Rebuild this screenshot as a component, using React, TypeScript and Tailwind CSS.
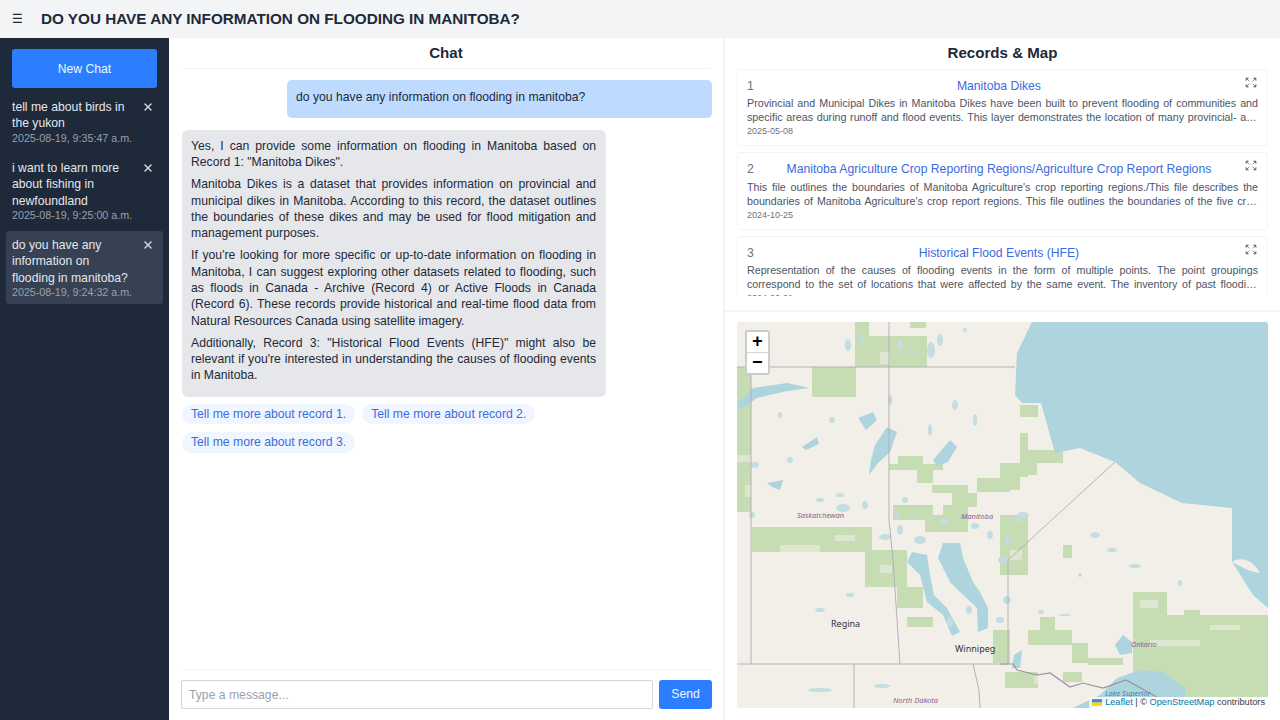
import { X } from "lucide-react";

const chats = [
  { title: "tell me about birds in the yukon", date: "2025-08-19, 9:35:47 a.m." },
  { title: "i want to learn more about fishing in newfoundland", date: "2025-08-19, 9:25:00 a.m." },
  { title: "do you have any information on flooding in manitoba?", date: "2025-08-19, 9:24:32 a.m.", active: true },
];

const records = [
  {
    title: "Manitoba Dikes",
    text: "Provincial and Municipal Dikes in Manitoba Dikes have been built to prevent flooding of communities and specific areas during runoff and flood events. This layer demonstrates the location of many provincial- and municipally-owned dikes across the whole of the province of Manitoba for reference and planning.",
    date: "2025-05-08",
  },
  {
    title: "Manitoba Agriculture Crop Reporting Regions/Agriculture Crop Report Regions",
    text: "This file outlines the boundaries of Manitoba Agriculture's crop reporting regions./This file describes the boundaries of Manitoba Agriculture's crop report regions. This file outlines the boundaries of the five crop reporting regions used across the province of Manitoba by the department.",
    date: "2024-10-25",
  },
  {
    title: "Historical Flood Events (HFE)",
    text: "Representation of the causes of flooding events in the form of multiple points. The point groupings correspond to the set of locations that were affected by the same event. The inventory of past flooding events in Canada has been compiled from many different historical sources over the years.",
    date: "2024-06-21",
  },
];

// map shapes, in page coordinates (viewBox matches the map's place on the page)
const greens = [
  [855, 322, 14, 14], [855, 336, 72, 31], [910, 322, 16, 6], [737, 367, 14, 145], [812, 367, 44, 30],
  [898, 456, 25, 10], [889, 464, 54, 6], [917, 464, 16, 19], [932, 485, 36, 8], [977, 478, 33, 14],
  [952, 493, 25, 14], [943, 505, 25, 27], [893, 505, 40, 15], [752, 527, 120, 25], [865, 550, 42, 37],
  [897, 587, 26, 21], [907, 617, 26, 10], [925, 515, 43, 17], [993, 630, 17, 33], [1000, 542, 28, 33],
  [1133, 592, 34, 23], [1133, 615, 135, 82], [1040, 617, 15, 13], [1028, 630, 44, 15], [1072, 643, 16, 20],
  [1088, 658, 35, 7], [1005, 672, 33, 16], [1063, 672, 19, 10], [1063, 545, 9, 13], [1020, 405, 18, 12],
  [1020, 433, 8, 44], [1028, 450, 35, 13], [1000, 463, 37, 12], [1000, 475, 20, 15], [1000, 515, 28, 27],
  [1184, 610, 16, 6],
];

// lighter blotches over the forest areas
const patches = [
  [737, 455, 14, 7], [745, 485, 6, 12], [780, 545, 40, 7], [835, 535, 20, 6], [880, 565, 12, 8], [1140, 600, 18, 8],
  [1150, 640, 50, 6], [1210, 625, 30, 5], [1010, 550, 12, 10], [1034, 676, 4, 8], [872, 323, 38, 11], [880, 352, 10, 12],
];

const lakes = [
  "737,404 753,388 787,383 810,388 787,391 757,398 740,410",
  "858,418 873,412 877,420 866,430",
  "875,445 887,427 897,432 890,452 878,463 869,475 871,460",
  "933,460 950,440 957,447 948,462 937,466",
  "802,447 817,437 819,444 806,450",
  "767,483 783,480 780,490 772,487",
  "943,543 960,543 963,558 973,582 980,592 988,608 988,628 978,632 977,608 960,592 950,582 938,558",
  "912,552 927,555 930,575 934,595 947,608 960,632 952,636 943,615 927,602 920,575 907,562",
  "1115,645 1123,635 1132,642 1132,653 1120,655",
  "1073,708 1100,695 1117,678 1140,670 1163,672 1185,688 1185,697 1120,697 1090,708",
  "1014,655 1022,650 1020,668 1012,668",
];

const ponds = [
  [848, 345, 3, 6], [862, 340, 2, 4], [931, 350, 4, 8], [940, 340, 3, 6], [965, 330, 2, 2], [900, 345, 3, 5],
  [890, 400, 2, 5], [912, 352, 4, 2], [955, 405, 3, 5], [975, 420, 2, 6], [930, 430, 2, 6], [780, 415, 2, 3],
  [832, 420, 3, 3], [755, 465, 4, 3], [790, 460, 3, 3], [840, 495, 4, 2], [843, 508, 7, 4], [820, 500, 4, 2],
  [865, 505, 3, 4], [905, 500, 3, 3], [897, 515, 3, 3], [752, 515, 3, 3], [885, 537, 6, 3], [900, 530, 3, 5],
  [945, 522, 5, 3], [920, 540, 6, 4], [975, 526, 4, 3], [990, 535, 3, 4], [1007, 540, 2, 5], [850, 595, 4, 2],
  [820, 610, 5, 2], [1003, 560, 5, 4], [1007, 600, 4, 4], [1023, 515, 6, 3], [1017, 520, 4, 2], [1095, 535, 5, 3],
  [1112, 550, 5, 2], [1135, 566, 6, 2], [1080, 575, 2, 2], [1180, 583, 2, 3], [1041, 612, 3, 2], [1065, 615, 6, 1],
  [820, 690, 12, 2], [882, 686, 8, 2], [1000, 620, 4, 3], [969, 610, 3, 4], [950, 622, 3, 5],
];

function ExpandIcon() {
  return (
    <svg viewBox="0 0 12 11" className="absolute right-[10px] top-[7px] h-[11px] w-[12px]" fill="#6b7280" stroke="#6b7280" strokeWidth="0.7">
      <path d="M1 1h2.5L1 3.5zM2 2l2.5 2.5M11 1H8.500l2.500 2.500zM10 2L7.500 4.500M1 10h2.500L1 7.500zM2 9l2.500-2.500M11 10H8.500l2.500-2.500zM10 9L7.500 6.500" />
    </svg>
  );
}

function MapDrawing() {
  return (
    <svg viewBox="737 322 531 386" className="block h-full w-full" preserveAspectRatio="none">
      <defs>
        <filter id="soft" x="0" y="0" width="100%" height="100%">
          <feGaussianBlur stdDeviation="0.6" />
        </filter>
      </defs>
      <rect x="737" y="322" width="531" height="386" fill="#f2efe9" />
      <g filter="url(#soft)">
        {greens.map(([x, y, w, h], i) => (
          <rect key={i} x={x} y={y} width={w} height={h} fill="#c6dcb3" />
        ))}
        {patches.map(([x, y, w, h], i) => (
          <rect key={i} x={x} y={y} width={w} height={h} fill="#f2efe9" opacity="0.55" />
        ))}
        <path
          d="M1032 322L1017 353L1015 395L1022 403L1041 403L1055 453L1080 448L1115 462L1140 483L1182 503L1232 508L1232 562L1253 595L1268 608V322Z"
          fill="#aed4dd"
        />
        <path d="M1232 562C1240 556 1254 560 1260 573C1250 572 1240 566 1232 562Z" fill="#f2efe9" />
        {lakes.map((points, i) => (
          <polygon key={i} points={points} fill="#aed4dd" />
        ))}
        {ponds.map(([cx, cy, rx, ry], i) => (
          <ellipse key={i} cx={cx} cy={cy} rx={rx} ry={ry} fill="#c3dde2" />
        ))}
        <g fill="none" stroke="#b5b1b6" strokeWidth="1">
          <path d="M737 367H1015" />
          <path d="M889 322V520L893 560L900 664" />
          <path d="M751 367V664" />
          <path d="M737 664H1008" />
          <path d="M1115 462L1008 560V664" />
          <path d="M854 664V708" />
          <path d="M973 664L979 690L980 708" />
        </g>
        <path
          d="M1000 664H1013L1017 670L1037 675L1050 673L1070 687L1083 683L1103 688L1126 680L1157 697"
          fill="none"
          stroke="#9b93a3"
          strokeWidth="1.2"
        />
      </g>
      <g fontFamily="'Noto Sans', sans-serif">
        <text x="797" y="518" fontSize="7.5" fontStyle="italic" fill="#8b5f8f">Saskatchewan</text>
        <text x="961" y="519" fontSize="7.5" fontStyle="italic" fill="#8b5f8f">Manitoba</text>
        <text x="1131" y="647" fontSize="7.5" fontStyle="italic" fill="#8b5f8f">Ontario</text>
        <text x="893" y="703" fontSize="7.5" fontStyle="italic" fill="#8b5f8f">North Dakota</text>
        <text x="1105" y="696" fontSize="7.5" fontStyle="italic" fill="#4d7fa8">Lake Superior</text>
        <text x="831" y="627" fontSize="9" fill="#333">Regina</text>
        <text x="955" y="652" fontSize="9" fill="#333">Winnipeg</text>
      </g>
    </svg>
  );
}

export default function App() {
  return (
    <div className="flex h-screen w-full flex-col overflow-hidden bg-white font-['Liberation_Sans',Arial,sans-serif] text-[12.2px] leading-[16.4px]">
      <header className="flex h-[38px] shrink-0 items-center bg-gray-100 pl-[12px]">
        <span className="w-[29px] text-[12px] text-gray-800">☰</span>
        <h1 className="text-[15.27px] font-bold uppercase text-gray-800">do you have any information on flooding in manitoba?</h1>
      </header>
      <div className="flex min-h-0 flex-1">
        <aside className="w-[169px] shrink-0 bg-gray-800 px-[6px] pt-[11px] text-gray-200">
          <button className="mx-[6px] mb-[5px] h-[39px] w-[145px] rounded-[3px] bg-blue-500 pt-[1px] text-blue-50">New Chat</button>
          <div className="flex flex-col gap-[4px]">
            {chats.map((c) => (
              <div key={c.date} className={c.active ? "relative rounded-[3px] bg-gray-700 px-[6px] pb-[5px] pt-[6px]" : "relative px-[6px] pb-[5px] pt-[6px]"}>
                <div className="pr-[22px]">{c.title}</div>
                <div className="text-[10.7px] leading-[13px] text-gray-400">{c.date}</div>
                <X className="absolute right-[9px] top-[8px] h-[12px] w-[12px] text-gray-300" strokeWidth={3} />
              </div>
            ))}
          </div>
        </aside>

        <main className="flex w-[554px] shrink-0 flex-col">
          <h2 className="mx-[12px] h-[31px] shrink-0 border-b border-gray-100 text-center text-[15.1px] font-bold leading-[30px] text-gray-800">Chat</h2>
          <div className="flex min-h-0 flex-1 flex-col pl-[13px] pr-[11px] pt-[11px] text-gray-800">
            <div className="ml-[105px] h-[38px] w-[425px] rounded-[5px] bg-blue-200 px-[9px] leading-[34px]">do you have any information on flooding in manitoba?</div>
            <div className="mt-[12px] flex w-[424px] flex-col gap-[5.4px] rounded-[6px] bg-gray-200 pb-[13px] pl-[9px] pr-[10px] pt-[8px] text-justify">
              <p>Yes, I can provide some information on flooding in Manitoba based on Record 1: "Manitoba Dikes".</p>
              <p>Manitoba Dikes is a dataset that provides information on provincial and municipal dikes in Manitoba. According to this record, the dataset outlines the boundaries of these dikes and may be used for flood mitigation and management purposes.</p>
              <p>If you're looking for more specific or up-to-date information on flooding in Manitoba, I can suggest exploring other datasets related to flooding, such as floods in Canada - Archive (Record 4) or Active Floods in Canada (Record 6). These records provide historical and real-time flood data from Natural Resources Canada using satellite imagery.</p>
              <p>Additionally, Record 3: "Historical Flood Events (HFE)" might also be relevant if you're interested in understanding the causes of flooding events in Manitoba.</p>
            </div>
            <div className="mt-[7px] flex w-[424px] flex-wrap gap-x-[7px] gap-y-[8px]">
              {[1, 2, 3].map((n) => (
                <span key={n} className="rounded-full bg-blue-50 px-[9px] py-[2px] text-[#3b6be0]">Tell me more about record {n}.</span>
              ))}
            </div>
          </div>
          <div className="ml-[12px] mr-[11px] flex h-[51px] shrink-0 items-start gap-[6px] border-t border-gray-100 pt-[10px]">
            <input readOnly placeholder="Type a message..." className="h-[29px] flex-1 rounded-[2px] border border-gray-300 px-[7px] outline-none placeholder:text-gray-400" />
            <button className="h-[29px] w-[53px] rounded-[3px] bg-blue-500 text-blue-50">Send</button>
          </div>
        </main>

        <section className="flex min-w-0 flex-1 flex-col border-l-2 border-gray-100">
          <h2 className="h-[31px] shrink-0 text-center text-[15.1px] font-bold leading-[30px] text-gray-800">Records &amp; Map</h2>
          <div className="mx-[12px] flex h-[227px] shrink-0 flex-col gap-[6px] overflow-hidden">
            {records.map((r, i) => (
              <div key={r.title} className="relative shrink-0 rounded-[2px] border border-gray-100 px-[9px] pb-[7px] pt-[8px]">
                <div className="flex pr-[14px] text-gray-500">
                  <span>{i + 1}</span>
                  <span className="flex-1 text-center text-[#3b6be0]">{r.title}</span>
                </div>
                <p className="mt-[2px] line-clamp-2 text-justify text-[10.7px] leading-[14px] text-gray-600">{r.text}</p>
                <div className="text-[9px] leading-[14px] text-gray-500">{r.date}</div>
                <ExpandIcon />
              </div>
            ))}
          </div>
          <div className="mt-[14px] flex min-h-0 flex-1 border-t-2 border-gray-100 px-[12px] pb-[12px] pt-[10px]">
            <div className="relative w-full overflow-hidden rounded-[3px]">
              <MapDrawing />
              <div className="absolute left-[8px] top-[8px] flex w-[25px] flex-col rounded-[3px] border-2 border-black/20 bg-white font-['Liberation_Mono',monospace] text-[18px] font-bold leading-[20px] text-black">
                <div className="h-[21px] border-b border-gray-300 text-center">+</div>
                <div className="h-[20px] text-center">−</div>
              </div>
              <div className="absolute bottom-0 right-0 flex items-center gap-[3px] bg-white/80 px-[3px] text-[9.2px] leading-[11px] text-gray-700">
                <svg viewBox="0 0 12 8" className="h-[7px] w-[10px]">
                  <rect width="12" height="4" fill="#4C7BE1" />
                  <rect y="4" width="12" height="4" fill="#FFD500" />
                </svg>
                <span><span className="text-[#0078A8]">Leaflet</span> | © <span className="text-[#0078A8]">OpenStreetMap</span> contributors</span>
              </div>
            </div>
          </div>
        </section>
      </div>
    </div>
  );
}
